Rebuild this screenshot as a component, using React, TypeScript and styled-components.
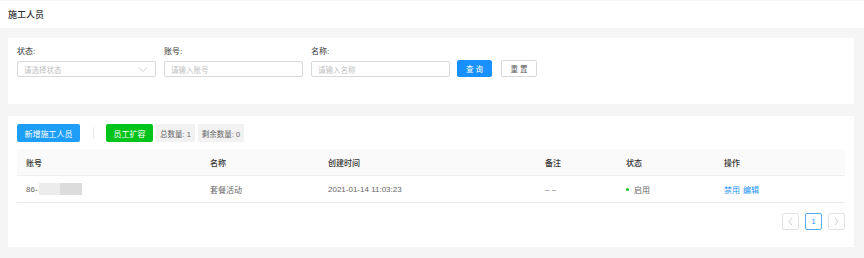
import React from "react";
import styled, { createGlobalStyle } from "styled-components";

const Global = createGlobalStyle`
  html, body { margin: 0; padding: 0; background: #f5f5f5; }
  body { font-family: "Liberation Sans", "Noto Sans CJK SC", sans-serif; color: #333; }
  * { box-sizing: border-box; }
`;

const Page = styled.div`
  width: 864px;
  height: 258px;
  padding-top: 1px;
  background: #f5f5f5;
  overflow: hidden;
`;

const Header = styled.div`
  height: 27px;
  background: #fff;
  display: flex;
  align-items: center;
  padding-left: 8px;
  font-size: 9px;
  font-weight: 500;
  color: #333;
`;

const Body = styled.div`
  padding: 10px 10px 0 8px;
  display: flex;
  flex-direction: column;
  gap: 12px;
`;

const Card = styled.div<{ $h: number }>`
  background: #fff;
  height: ${(p) => p.$h}px;
  padding: 8px 9px 0 9px;
`;

const FilterRow = styled.div`
  display: flex;
  align-items: flex-end;
  gap: 8px;
  padding-top: 1px;
`;

const Field = styled.div`
  display: flex;
  flex-direction: column;
  gap: 4px;
`;

const Label = styled.div`
  font-size: 8px;
  line-height: 10px;
  color: #333;
`;

const Input = styled.div`
  width: 139px;
  height: 16px;
  border: 1px solid #d9d9d9;
  border-radius: 2px;
  display: flex;
  align-items: center;
  justify-content: space-between;
  padding: 0 7px 0 6px;
  font-size: 7.5px;
  color: #bfbfbf;
`;

const Btn = styled.div<{ $primary?: boolean }>`
  height: 17px;
  width: ${(p) => (p.$primary ? 35 : 36)}px;
  border-radius: 2px;
  display: flex;
  align-items: center;
  justify-content: center;
  font-size: 7.5px;
  letter-spacing: 2px;
  padding-left: 2px;
  background: ${(p) => (p.$primary ? "#1890ff" : "#fff")};
  color: ${(p) => (p.$primary ? "#fff" : "#555")};
  border: 1px solid ${(p) => (p.$primary ? "#1890ff" : "#d9d9d9")};
  margin-left: ${(p) => (p.$primary ? -1 : 1)}px;
`;

const Toolbar = styled.div`
  display: flex;
  align-items: center;
  height: 18px;
`;

const ActionBtn = styled.div<{ $color: string; $w: number }>`
  height: 18px;
  width: ${(p) => p.$w}px;
  background: ${(p) => p.$color};
  border-radius: 2px;
  color: #fff;
  font-size: 8px;
  display: flex;
  align-items: center;
  justify-content: center;
`;

const VDivider = styled.div`
  width: 1px;
  height: 12px;
  background: #e8e8e8;
  margin: 0 12px 0 13px;
`;

const Count = styled.div`
  height: 18px;
  background: #f2f2f2;
  color: #666;
  font-size: 7.5px;
  padding: 0 4px;
  display: flex;
  align-items: center;
  margin-left: 3px;
`;

const Table = styled.div`
  margin-top: 7px;
  display: grid;
  grid-template-columns: 184px 118px 217px 81px 98px 130px;
`;

const Th = styled.div`
  height: 27px;
  background: #fafafa;
  border-bottom: 1px solid #eee;
  display: flex;
  align-items: center;
  padding-left: 9px;
  font-size: 8px;
  font-weight: 500;
  color: #333;
`;

const Td = styled.div<{ $color?: string }>`
  height: 27px;
  border-bottom: 1px solid #eaeaea;
  display: flex;
  align-items: center;
  padding-left: 9px;
  font-size: 8px;
  color: ${(p) => p.$color || "#666"};
`;

const Blur = styled.span`
  display: inline-flex;
  height: 12px;
  margin-left: 1px;
`;

const BlurPart = styled.span<{ $w: number; $c: string }>`
  width: ${(p) => p.$w}px;
  background: ${(p) => p.$c};
`;

const Dot = styled.span`
  width: 3px;
  height: 3px;
  border-radius: 50%;
  background: #00c21e;
  margin-right: 5px;
`;

const Link = styled.span`
  color: #1890ff;
  margin-right: 3px;
`;

const Pager = styled.div`
  display: flex;
  justify-content: flex-end;
  gap: 6px;
  margin-top: 10px;
`;

const PageBtn = styled.div<{ $active?: boolean }>`
  width: 17px;
  height: 17px;
  border: 1px solid ${(p) => (p.$active ? "#5aa9f5" : "#e3e3e3")};
  border-radius: 2px;
  display: flex;
  align-items: center;
  justify-content: center;
  font-size: 7.5px;
  color: ${(p) => (p.$active ? "#1890ff" : "#ccc")};
`;

const Chevron = ({ dir }: { dir: "down" | "left" | "right" }) => {
  const d =
    dir === "down" ? "M1 1.5 L5 5.5 L9 1.5" : dir === "left" ? "M4 1 L1 4.5 L4 8" : "M1 1 L4 4.5 L1 8";
  const w = dir === "down" ? 10 : 5;
  const h = dir === "down" ? 7 : 9;
  return (
    <svg width={w} height={h} viewBox={`0 0 ${w} ${h}`}>
      <path d={d} fill="none" stroke="#c4c4c4" strokeWidth="0.9" />
    </svg>
  );
};

export default function App() {
  return (
    <Page>
      <Global />
      <Header>施工人员</Header>
      <Body>
        <Card $h={66}>
          <FilterRow>
            <Field>
              <Label>状态:</Label>
              <Input>
                <span>请选择状态</span>
                <Chevron dir="down" />
              </Input>
            </Field>
            <Field>
              <Label>账号:</Label>
              <Input>请输入账号</Input>
            </Field>
            <Field>
              <Label>名称:</Label>
              <Input>请输入名称</Input>
            </Field>
            <Btn $primary>查询</Btn>
            <Btn>重置</Btn>
          </FilterRow>
        </Card>
        <Card $h={131}>
          <Toolbar>
            <ActionBtn $color="#1e9ef7" $w={63}>新增施工人员</ActionBtn>
            <VDivider />
            <ActionBtn $color="#00c31c" $w={47}>员工扩容</ActionBtn>
            <Count>总数量: 1</Count>
            <Count>剩余数量: 0</Count>
          </Toolbar>
          <Table>
            <Th>账号</Th>
            <Th>名称</Th>
            <Th>创建时间</Th>
            <Th>备注</Th>
            <Th>状态</Th>
            <Th>操作</Th>
            <Td>
              86-
              <Blur>
                <BlurPart $w={21} $c="#ececec" />
                <BlurPart $w={22} $c="#dcdcdc" />
              </Blur>
            </Td>
            <Td>套餐活动</Td>
            <Td>2021-01-14 11:03:23</Td>
            <Td>– –</Td>
            <Td>
              <Dot />
              启用
            </Td>
            <Td>
              <Link>禁用</Link>
              <Link>编辑</Link>
            </Td>
          </Table>
          <Pager>
            <PageBtn>
              <Chevron dir="left" />
            </PageBtn>
            <PageBtn $active>1</PageBtn>
            <PageBtn>
              <Chevron dir="right" />
            </PageBtn>
          </Pager>
        </Card>
      </Body>
    </Page>
  );
}
